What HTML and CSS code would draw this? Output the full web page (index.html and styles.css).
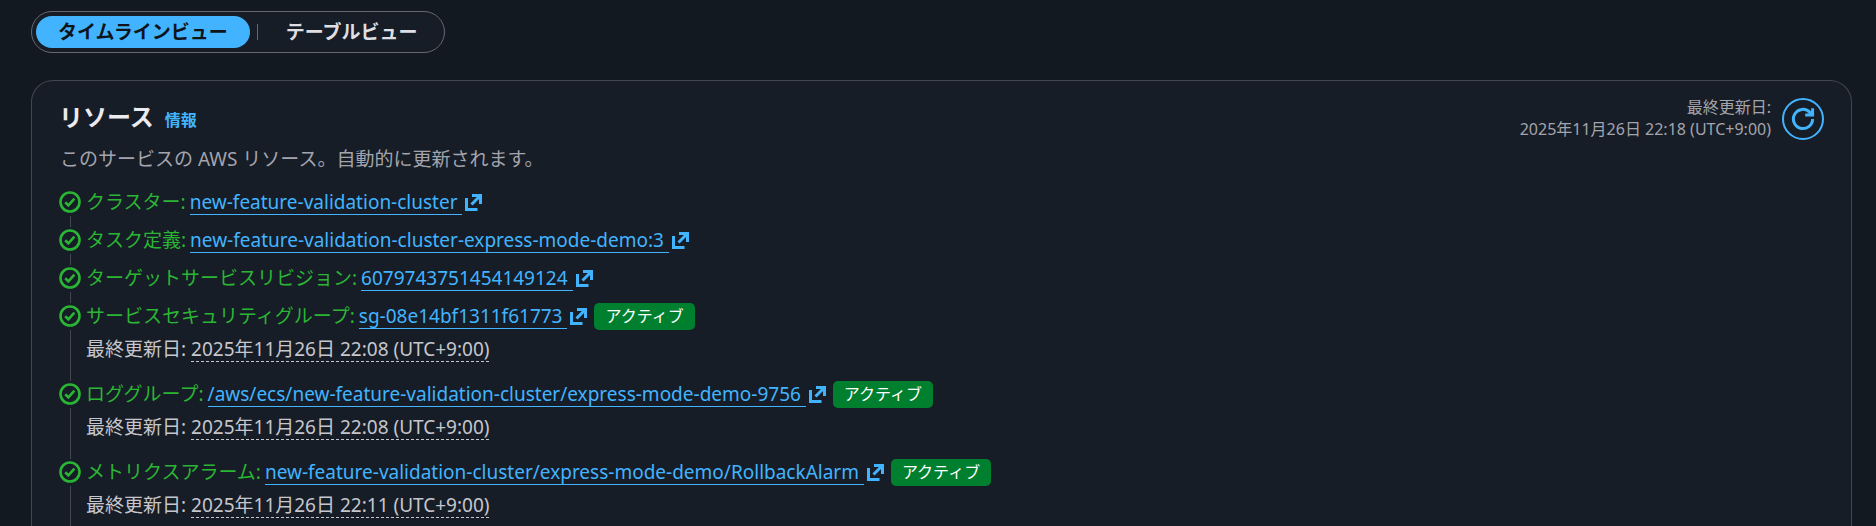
FILE: index.html
```html
<!DOCTYPE html>
<html lang="ja">
<head>
<meta charset="utf-8">
<meta name="viewport" content="width=device-width, initial-scale=1">
<title>リソース</title>
<link rel="stylesheet" href="styles.css">
</head>
<body>
<svg class="defs" aria-hidden="true">
  <symbol id="check" viewBox="0 0 22 22">
    <circle cx="11" cy="11" r="9.5"/>
    <path d="M6.2 11.2l3.2 3.1 6-6.6"/>
  </symbol>
  <symbol id="external" viewBox="0 0 17 17">
    <path d="M7 1.5h8.5V10M15.2 1.8L6.5 10.5M1.5 4v11.5H12.5"/>
  </symbol>
</svg>
<main class="page">
  <div class="views" role="group" aria-label="ビュー">
    <button type="button" class="view view-active" aria-pressed="true">タイムラインビュー</button>
    <span class="view-divider"></span>
    <button type="button" class="view" aria-pressed="false">テーブルビュー</button>
  </div>

  <section class="card">
    <header class="card-header">
      <div class="heading">
        <div class="title-row">
          <h2 class="title">リソース</h2>
          <a class="info" href="#info">情報</a>
        </div>
        <p class="description">このサービスの AWS リソース。自動的に更新されます。</p>
      </div>
      <div class="actions">
        <p class="updated">最終更新日:<br>2025年11月26日 22:18 (UTC+9:00)</p>
        <button type="button" class="refresh" aria-label="更新">
          <svg class="refresh-icon" viewBox="0 0 24 24"><path d="M21.6 12A9.6 9.6 0 1 1 19 5.4L21 7.6M21.6 1.2V8H14.2"/></svg>
        </button>
      </div>
    </header>

    <ol class="timeline">
      <li class="step">
        <div class="rail"><svg class="check"><use href="#check"/></svg><span class="line"></span></div>
        <div class="step-title"><span class="label">クラスター:</span><a class="link" href="#cluster"><span class="link-text">new-feature-validation-cluster&nbsp;</span><svg class="external"><use href="#external"/></svg></a></div>
      </li>
      <li class="step">
        <div class="rail"><svg class="check"><use href="#check"/></svg><span class="line"></span></div>
        <div class="step-title"><span class="label">タスク定義:</span><a class="link" href="#task"><span class="link-text">new-feature-validation-cluster-express-mode-demo:3&nbsp;</span><svg class="external"><use href="#external"/></svg></a></div>
      </li>
      <li class="step">
        <div class="rail"><svg class="check"><use href="#check"/></svg><span class="line"></span></div>
        <div class="step-title"><span class="label">ターゲットサービスリビジョン:</span><a class="link" href="#revision"><span class="link-text">6079743751454149124&nbsp;</span><svg class="external"><use href="#external"/></svg></a></div>
      </li>
      <li class="step">
        <div class="rail"><svg class="check"><use href="#check"/></svg><span class="line"></span></div>
        <div class="step-body">
          <div class="step-title"><span class="label">サービスセキュリティグループ:</span><a class="link" href="#security-group"><span class="link-text">sg-08e14bf1311f61773&nbsp;</span><svg class="external"><use href="#external"/></svg></a><span class="badge">アクティブ</span></div>
          <div class="date">最終更新日: <time class="time">2025年11月26日 22:08 (UTC+9:00)</time></div>
        </div>
      </li>
      <li class="step">
        <div class="rail"><svg class="check"><use href="#check"/></svg><span class="line"></span></div>
        <div class="step-body">
          <div class="step-title"><span class="label">ロググループ:</span><a class="link" href="#log-group"><span class="link-text">/aws/ecs/new-feature-validation-cluster/express-mode-demo-9756&nbsp;</span><svg class="external"><use href="#external"/></svg></a><span class="badge">アクティブ</span></div>
          <div class="date">最終更新日: <time class="time">2025年11月26日 22:08 (UTC+9:00)</time></div>
        </div>
      </li>
      <li class="step">
        <div class="rail"><svg class="check"><use href="#check"/></svg><span class="line"></span></div>
        <div class="step-body">
          <div class="step-title"><span class="label">メトリクスアラーム:</span><a class="link" href="#alarm"><span class="link-text">new-feature-validation-cluster/express-mode-demo/RollbackAlarm&nbsp;</span><svg class="external"><use href="#external"/></svg></a><span class="badge">アクティブ</span></div>
          <div class="date">最終更新日: <time class="time">2025年11月26日 22:11 (UTC+9:00)</time></div>
        </div>
      </li>
    </ol>
  </section>
</main>
</body>
</html>
```
FILE: styles.css
```css
* {
  box-sizing: border-box;
}

html {
  height: 100%;
  overflow: hidden;
  background: #131920;
}

body {
  height: 100%;
  margin: 0;
  background: #131920;
  color: #c6c6cd;
  font-family: "Noto Sans", "Noto Sans CJK JP", sans-serif;
  font-size: 19px;
  line-height: 26px;
}

.defs {
  display: none;
}

.page {
  display: flex;
  flex-direction: column;
  gap: 27px;
  height: 100%;
  padding: 11px 24px 0 31px;
}

.views {
  display: flex;
  align-items: center;
  align-self: flex-start;
  padding: 4px;
  border: 1px solid #656871;
  border-radius: 22px;
  background: #161d26;
}

.view {
  height: 32px;
  padding: 0 22px;
  border: 0;
  border-radius: 16px;
  background: transparent;
  color: #dedee3;
  font: inherit;
  font-weight: 700;
}

.view-active {
  background: #42b4ff;
  color: #0f141a;
}

.view-divider {
  width: 1px;
  height: 16px;
  margin: 0 6px 0 7px;
  background: #656871;
}

.card {
  flex: 1 0 auto;
  padding: 15px 27px 0;
  border: 1px solid #424650;
  border-bottom: 0;
  border-radius: 22px 22px 0 0;
  background: #161d26;
}

.card-header {
  display: flex;
  justify-content: space-between;
  align-items: flex-start;
}

.title-row {
  display: flex;
  align-items: baseline;
  gap: 11px;
}

.title {
  margin: 0;
  color: #ebebf0;
  font-size: 24px;
  line-height: 42px;
}

.info {
  color: #42b4ff;
  font-size: 16px;
  font-weight: 700;
  text-decoration: none;
}

.description {
  margin: 8px 0 0 1px;
  color: #a4a4ad;
}

.actions {
  display: flex;
  align-items: flex-start;
  gap: 11px;
}

.updated {
  margin: 0;
  color: #a4a4ad;
  font-size: 16px;
  line-height: 22px;
  text-align: right;
}

.refresh {
  display: grid;
  place-items: center;
  width: 42px;
  height: 42px;
  margin-top: 2px;
  padding: 0;
  border: 2px solid #42b4ff;
  border-radius: 50%;
  background: transparent;
}

.refresh-icon {
  width: 24px;
  height: 24px;
  fill: none;
  stroke: #42b4ff;
  stroke-width: 3;
}

.timeline {
  margin: 17px 0 0;
  padding: 0;
  list-style: none;
}

.step {
  display: flex;
  gap: 5px;
}

.rail {
  display: flex;
  flex-direction: column;
  align-items: center;
  gap: 3px;
  width: 22px;
}

.check {
  flex: none;
  width: 22px;
  height: 22px;
  margin-top: 2px;
  fill: none;
  stroke: #2bb534;
  stroke-width: 2.6;
}

.line {
  flex: 1 0 11px;
  width: 1px;
  background: #424650;
}

.step-title {
  display: flex;
  align-items: center;
  height: 26px;
  white-space: nowrap;
}

.label {
  margin-right: 4px;
  color: #2bb534;
}

.link {
  display: flex;
  align-items: center;
  gap: 3px;
  color: #42b4ff;
  text-decoration: none;
}

.link-text {
  border-bottom: 1px solid #42b4ff;
  line-height: 24px;
}

.external {
  width: 17px;
  height: 17px;
  fill: none;
  stroke: #42b4ff;
  stroke-width: 3;
}

.badge {
  margin-left: 7px;
  padding: 0 11px;
  border-radius: 5px;
  background: #00802f;
  color: #ffffff;
  font-size: 16px;
  line-height: 27px;
}

.date {
  padding: 7px 0 19px;
}

.time {
  display: inline-block;
  border-bottom: 1px dashed #c6c6cd;
  line-height: 24px;
}
```
